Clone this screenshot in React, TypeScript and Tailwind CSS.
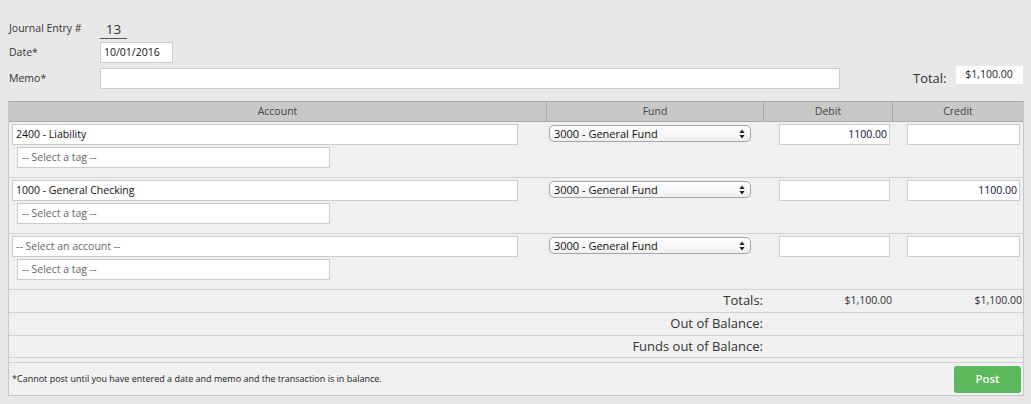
import React from "react";

function FundSelect() {
  return (
    <div className="ml-[2px] mt-[1px] flex h-[17px] w-[202px] items-center justify-between rounded-[5px] border border-[#a6a6a6] bg-gradient-to-b from-[#ffffff] to-[#efefef] pl-[4px] pr-[5px] text-[11px] leading-none text-[#111]">
      <span>3000 - General Fund</span>
      <svg width="6" height="10" viewBox="0 0 6 10">
        <path d="M3 0.5 L5.6 4 H0.4 Z" fill="#222" />
        <path d="M3 9.5 L5.6 6 H0.4 Z" fill="#222" />
      </svg>
    </div>
  );
}

function Row({
  account,
  placeholder,
  debit,
  credit,
}: {
  account: string;
  placeholder?: boolean;
  debit?: string;
  credit?: string;
}) {
  return (
    <div className="grid grid-cols-[538px_217px_129px_130px] border-b border-[#d2d2d2] bg-[#f0f0f0] pb-[9px] pt-[2px]">
      <div className="flex flex-col gap-[2px] pl-[3px]">
        <div
          className={`flex h-[21px] w-[506px] items-center border border-[#cccccc] bg-white pl-[3px] text-[10.5px] ${
            placeholder ? "text-[#666]" : "text-[#111]"
          }`}
        >
          {account}
        </div>
        <div className="ml-[5px] flex h-[21px] w-[313px] items-center border border-[#cccccc] bg-white pl-[4px] text-[10.5px] text-[#666]">
          -- Select a tag --
        </div>
      </div>
      <div>
        <FundSelect />
      </div>
      <div className="pl-[15px]">
        <div className="flex h-[21px] w-[111px] items-center justify-end border border-[#cccccc] bg-white pr-[2px] text-[10.5px] text-[#0d0d33]">
          {debit}
        </div>
      </div>
      <div className="pl-[14px]">
        <div className="flex h-[21px] w-[113px] items-center justify-end border border-[#cccccc] bg-white pr-[2px] text-[10.5px] text-[#0d0d33]">
          {credit}
        </div>
      </div>
    </div>
  );
}

function TotalRow({
  label,
  debit,
  credit,
  h,
}: {
  label: string;
  debit?: string;
  credit?: string;
  h: "a" | "b";
}) {
  return (
    <div
      className={`grid ${h === "a" ? "h-[23px]" : "h-[22px]"} grid-cols-[755px_129px_130px] items-center border-b border-[#d2d2d2] bg-[#f0f0f0]`}
    >
      <div className="pr-[1px] text-right text-[13px] text-[#333]">{label}</div>
      <div className="pr-[1px] text-right text-[10.5px] text-[#333]">{debit}</div>
      <div className="pr-[1px] text-right text-[10.5px] text-[#333]">{credit}</div>
    </div>
  );
}

export default function App() {
  return (
    <div className="h-[404px] w-[1031px] overflow-hidden bg-[#e8e8e8] font-['Open_Sans',sans-serif] text-[#333]">
      <div className="pt-[19px]">
        <div className="flex h-[20px] items-center pl-[9px]">
          <div className="w-[91px] text-[10.5px] text-[#333]">Journal Entry #</div>
          <div className="w-[27px] border-b border-[#555] text-center text-[13.5px] leading-[18px] text-[#333]">
            13
          </div>
        </div>
        <div className="mt-[3px] flex h-[21px] items-center pl-[9px]">
          <div className="w-[91px] text-[10.5px] text-[#333]">Date*</div>
          <div className="flex h-[21px] w-[73px] items-center border border-[#cccccc] bg-white pl-[3px] text-[10.5px] text-[#111]">
            10/01/2016
          </div>
        </div>
        <div className="mt-[5px] flex h-[21px] items-center pl-[9px]">
          <div className="w-[91px] text-[10.5px] text-[#333]">Memo*</div>
          <div className="h-[21px] w-[740px] border border-[#cccccc] bg-white" />
          <div className="ml-[73px] mt-[1px] text-[13px] text-[#333]">Total:</div>
          <div className="mb-[7px] ml-[9px] flex h-[18px] w-[67px] items-center justify-center bg-white text-[10.5px] text-[#222]">
            $1,100.00
          </div>
        </div>
      </div>

      <div className="ml-[8px] mt-[12px] w-[1016px] border-x border-b border-[#c8c8c8]">
        <div className="grid h-[21px] grid-cols-[538px_217px_129px_130px] border-y border-[#aaaaaa] bg-[#c8c8c8] text-[10.5px] text-[#444]">
          <div className="flex items-center justify-center border-r border-[#aaaaaa]">Account</div>
          <div className="flex items-center justify-center border-r border-[#aaaaaa]">Fund</div>
          <div className="flex items-center justify-center border-r border-[#aaaaaa]">Debit</div>
          <div className="flex items-center justify-center">Credit</div>
        </div>
        <Row account="2400 - Liability" debit="1100.00" />
        <Row account="1000 - General Checking" credit="1100.00" />
        <Row account="-- Select an account --" placeholder />
        <TotalRow h="a" label="Totals:" debit="$1,100.00" credit="$1,100.00" />
        <TotalRow h="a" label="Out of Balance:" />
        <TotalRow h="b" label="Funds out of Balance:" />
        <div className="h-[5px] border-b border-[#d2d2d2] bg-[#f0f0f0]" />
        <div className="flex h-[32px] items-center justify-between bg-[#f0f0f0] pl-[3px] pr-[2px]">
          <div className="text-[9px] text-[#222]">
            *Cannot post until you have entered a date and memo and the transaction is in balance.
          </div>
          <div className="flex h-[27px] w-[67px] items-center justify-center rounded-[3px] bg-[#5cb85c] text-[11.5px] font-semibold text-white">
            Post
          </div>
        </div>
      </div>
    </div>
  );
}
